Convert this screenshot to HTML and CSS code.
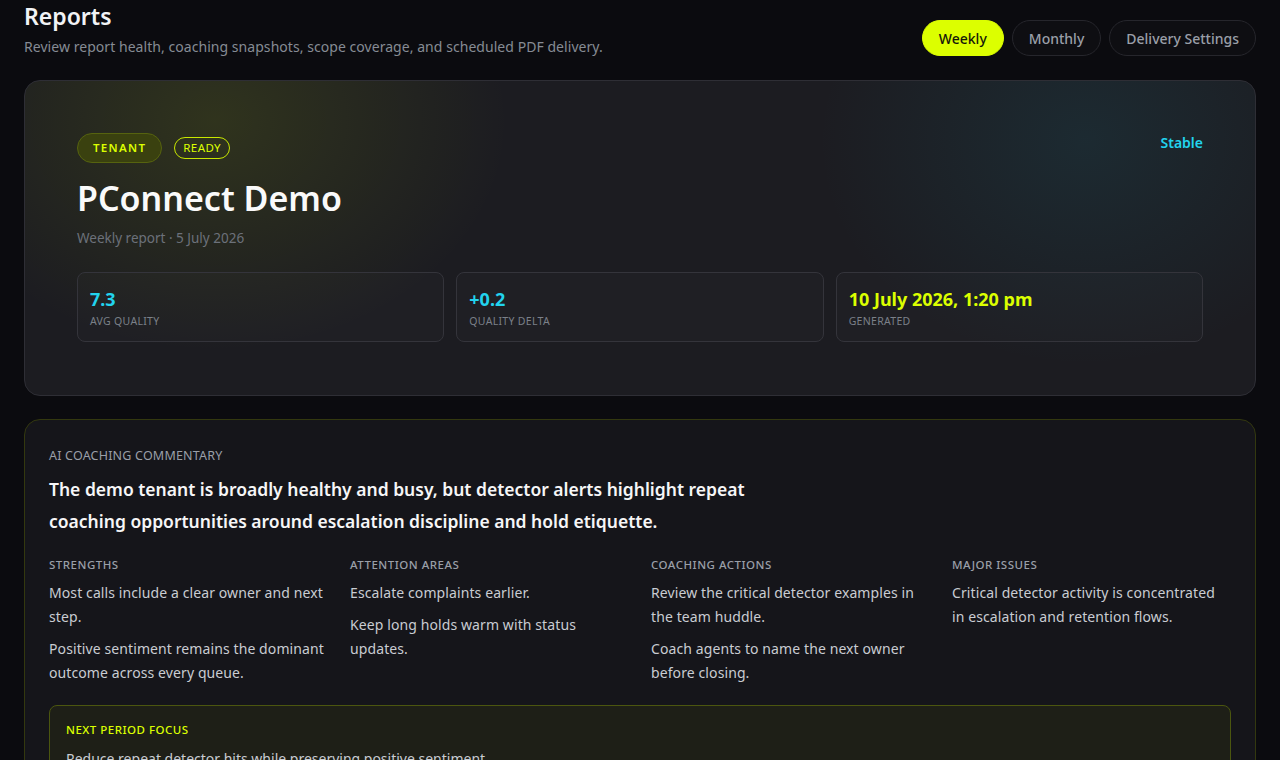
FILE: index.html
```html
<!DOCTYPE html>
<html lang="en">
<head>
  <meta charset="UTF-8">
  <meta name="viewport" content="width=device-width, initial-scale=1.0">
  <title>Reports</title>
  <link rel="stylesheet" href="styles.css">
</head>
<body>
  <div class="page">
    <header class="page-head">
      <div>
        <h1>Reports</h1>
        <p class="subtitle">Review report health, coaching snapshots, scope coverage, and scheduled PDF delivery.</p>
      </div>
      <nav class="tabs">
        <button class="tab active">Weekly</button>
        <button class="tab">Monthly</button>
        <button class="tab">Delivery Settings</button>
      </nav>
    </header>

    <section class="hero">
      <div class="hero-top">
        <div>
          <div class="tags">
            <span class="tag tag-solid">TENANT</span>
            <span class="tag tag-outline">READY</span>
          </div>
          <h2 class="hero-title">PConnect Demo</h2>
          <p class="hero-meta">Weekly report · 5 July 2026</p>
        </div>
        <span class="status">Stable</span>
      </div>

      <div class="stats">
        <div class="stat">
          <div class="stat-value teal">7.3</div>
          <div class="stat-label">Avg quality</div>
        </div>
        <div class="stat">
          <div class="stat-value teal">+0.2</div>
          <div class="stat-label">Quality delta</div>
        </div>
        <div class="stat">
          <div class="stat-value lime">10 July 2026, 1:20 pm</div>
          <div class="stat-label">Generated</div>
        </div>
      </div>
    </section>

    <section class="commentary">
      <div class="section-label">AI Coaching Commentary</div>
      <p class="summary">The demo tenant is broadly healthy and busy, but detector alerts highlight repeat coaching opportunities around escalation discipline and hold etiquette.</p>

      <div class="columns">
        <div class="col">
          <h3>Strengths</h3>
          <p>Most calls include a clear owner and next step.</p>
          <p>Positive sentiment remains the dominant outcome across every queue.</p>
        </div>
        <div class="col">
          <h3>Attention areas</h3>
          <p>Escalate complaints earlier.</p>
          <p>Keep long holds warm with status updates.</p>
        </div>
        <div class="col">
          <h3>Coaching actions</h3>
          <p>Review the critical detector examples in the team huddle.</p>
          <p>Coach agents to name the next owner before closing.</p>
        </div>
        <div class="col">
          <h3>Major issues</h3>
          <p>Critical detector activity is concentrated in escalation and retention flows.</p>
        </div>
      </div>

      <div class="focus">
        <h3>Next period focus</h3>
        <p>Reduce repeat detector hits while preserving positive sentiment.</p>
      </div>
    </section>
  </div>
</body>
</html>
```

FILE: styles.css
```css
body {
  margin: 0;
  background-color: #0b0b0f;
  color: #f2f3f5;
  font-family: "Noto Sans", Lato, sans-serif;
}
.page {
  padding: 0 24px 24px;
}
.page-head {
  display: flex;
  justify-content: space-between;
  align-items: flex-start;
  height: 80px;
}
h1 {
  margin: 2px 0 0;
  font-size: 23px;
  font-weight: 600;
  line-height: 28px;
}
.subtitle {
  margin: 7px 0 0;
  font-size: 14px;
  letter-spacing: 0.05px;
  color: #868b94;
}
.tabs {
  display: flex;
  gap: 8px;
  margin-top: 20px;
}
.tab {
  height: 36px;
  padding: 0 16px;
  border-radius: 18px;
  border: 1px solid #26262c;
  background-color: #0e0e12;
  color: #9a9fa8;
  font-family: inherit;
  font-size: 14px;
  font-weight: 500;
}
.tab.active {
  background-color: #dcff00;
  border-color: #dcff00;
  color: #15170a;
}
.hero {
  border: 1px solid #2e2e35;
  border-radius: 16px;
  padding: 52px 52px 53px;
  background:
    radial-gradient(ellipse 420px 330px at 190px 40px, rgba(190, 220, 0, 0.12), transparent 70%),
    radial-gradient(ellipse 380px 320px at 1060px 60px, rgba(30, 130, 150, 0.14), transparent 70%),
    #1c1c21;
}
.hero-top {
  display: flex;
  justify-content: space-between;
  align-items: flex-start;
}
.tags {
  display: flex;
  align-items: center;
  gap: 12px;
}
.tag {
  font-size: 11.5px;
  font-weight: 600;
  letter-spacing: 1.3px;
  color: #dcff00;
  border-radius: 15px;
}
.tag-solid {
  padding: 0 15px;
  line-height: 28px;
  background-color: #3a410f;
  border: 1px solid #56630f;
}
.tag-outline {
  padding: 0 8px;
  line-height: 20px;
  font-weight: 400;
  letter-spacing: 0.4px;
  border: 1px solid #c8e800;
}
.hero-title {
  margin: 13px 0 0;
  font-size: 34px;
  font-weight: 600;
  line-height: 44px;
  color: #fafafa;
}
.hero-meta {
  margin: 9px 0 0;
  font-size: 13.5px;
  color: #6c717a;
}
.status {
  margin-top: 0;
  font-size: 14px;
  font-weight: 600;
  color: #22d3ee;
}
.stats {
  display: grid;
  grid-template-columns: repeat(3, 1fr);
  gap: 12px;
  margin-top: 25px;
}
.stat {
  height: 70px;
  box-sizing: border-box;
  padding: 14px 12px 0;
  border: 1px solid #34343b;
  border-radius: 8px;
  background-color: rgba(255, 255, 255, 0.015);
}
.stat-value {
  font-size: 18px;
  font-weight: 700;
  line-height: 24px;
}
.stat-label {
  margin-top: 3px;
  font-size: 10.5px;
  letter-spacing: 0.3px;
  text-transform: uppercase;
  color: #7b8089;
}
.teal {
  color: #22d3ee;
}
.lime {
  color: #dcff00;
}
.commentary {
  margin-top: 23px;
  border: 1px solid #33380f;
  border-radius: 16px;
  padding: 27px 24px 24px;
  background-color: #15151a;
}
.section-label {
  font-size: 12.5px;
  letter-spacing: 0.2px;
  text-transform: uppercase;
  color: #9a9fa8;
}
.summary {
  margin: 9px 0 0;
  max-width: 720px;
  font-size: 17.5px;
  font-weight: 600;
  line-height: 32px;
  color: #f6f6f7;
}
.columns {
  display: grid;
  grid-template-columns: repeat(4, 1fr);
  gap: 22px;
  margin-top: 20px;
}
.col h3,
.focus h3 {
  margin: 0 0 9px;
  font-size: 11.5px;
  font-weight: 500;
  letter-spacing: 0.5px;
  text-transform: uppercase;
  color: #9a9fa8;
}
.col p {
  margin: 0 0 8px;
  font-size: 14px;
  letter-spacing: 0.1px;
  line-height: 24px;
  color: #c9ccd2;
}
.focus {
  margin-top: 12px;
  padding: 16px 16px;
  border: 1px solid #4b560f;
  border-radius: 8px;
  background-color: #1e1f17;
}
.focus h3 {
  color: #dcff00;
  margin-bottom: 10px;
}
.focus p {
  margin: 0;
  font-size: 14px;
  line-height: 24px;
  color: #c9ccd2;
}
```
